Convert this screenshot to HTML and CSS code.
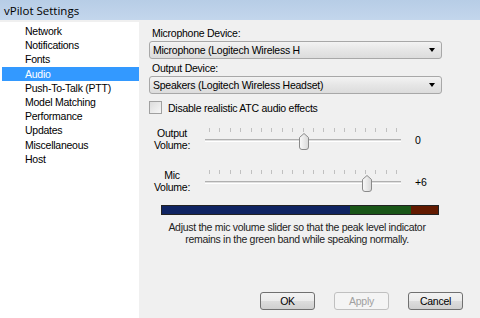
FILE: index.html
```html
<!DOCTYPE html>
<html lang="en">
<head>
    <meta charset="UTF-8">
    <title>vPilot Settings</title>
    <link rel="stylesheet" href="styles.css">
</head>
<body>
    <div class="window">
        <div class="titlebar">vPilot Settings</div>
        <div class="content">
            <ul class="nav">
                <li>Network</li>
                <li>Notifications</li>
                <li>Fonts</li>
                <li class="selected">Audio</li>
                <li>Push-To-Talk (PTT)</li>
                <li>Model Matching</li>
                <li>Performance</li>
                <li>Updates</li>
                <li>Miscellaneous</li>
                <li>Host</li>
            </ul>

            <div class="panel">
                <label class="field-label">Microphone Device:</label>
                <div class="combo">
                    <span>Microphone (Logitech Wireless H</span>
                    <span class="arrow"></span>
                </div>

                <label class="field-label">Output Device:</label>
                <div class="combo">
                    <span>Speakers (Logitech Wireless Headset)</span>
                    <span class="arrow"></span>
                </div>

                <div class="check-row">
                    <span class="checkbox"></span>
                    <span>Disable realistic ATC audio effects</span>
                </div>

                <div class="slider-row output">
                    <div class="slider-label">Output<br>Volume:</div>
                    <div class="slider">
                        <div class="ticks"></div>
                        <div class="track"></div>
                        <svg class="thumb" style="left: 94px" width="10" height="17" viewBox="0 0 10 17">
                            <defs>
                                <linearGradient id="tg1" x1="0" y1="0" x2="1" y2="0">
                                    <stop offset="0" stop-color="#fafafa"/>
                                    <stop offset="1" stop-color="#d8d8d8"/>
                                </linearGradient>
                            </defs>
                            <path d="M0.5 4.5 L5 0.5 L9.5 4.5 L9.5 14 Q9.5 16.5 7 16.5 L3 16.5 Q0.5 16.5 0.5 14 Z" fill="url(#tg1)" stroke="#8a8a8a"/>
                        </svg>
                    </div>
                    <div class="slider-value">0</div>
                </div>

                <div class="slider-row mic">
                    <div class="slider-label">Mic<br>Volume:</div>
                    <div class="slider">
                        <div class="ticks"></div>
                        <div class="track"></div>
                        <svg class="thumb" style="left: 157px" width="10" height="17" viewBox="0 0 10 17">
                            <path d="M0.5 4.5 L5 0.5 L9.5 4.5 L9.5 14 Q9.5 16.5 7 16.5 L3 16.5 Q0.5 16.5 0.5 14 Z" fill="url(#tg1)" stroke="#8a8a8a"/>
                        </svg>
                    </div>
                    <div class="slider-value">+6</div>
                </div>

                <div class="level-bar">
                    <div class="band blue"></div>
                    <div class="band green"></div>
                    <div class="band red"></div>
                </div>

                <p class="hint">Adjust the mic volume slider so that the peak level indicator<br>remains in the green band while speaking normally.</p>

                <div class="buttons">
                    <button class="btn">OK</button>
                    <button class="btn" disabled>Apply</button>
                    <button class="btn">Cancel</button>
                </div>
            </div>
        </div>
    </div>
</body>
</html>
```

FILE: styles.css
```css
body {
    margin: 0;
    font-family: "Liberation Sans", Arial, sans-serif;
    font-size: 10.5px;
    letter-spacing: -0.25px;
    color: #000;
    background: #f0f0f0;
}

.window {
    width: 480px;
    height: 318px;
    display: flex;
    flex-direction: column;
    overflow: hidden;
}

.titlebar {
    height: 20px;
    line-height: 21px;
    padding-left: 4px;
    font-family: "Open Sans", "Liberation Sans", sans-serif;
    font-size: 11.5px;
    letter-spacing: 0;
    background: linear-gradient(#b7cde6, #c3d6ec);
}

.content {
    flex: 1;
    display: flex;
    padding-top: 2px;
}

.nav {
    list-style: none;
    margin: 0;
    padding: 2px 0 0 2px;
    width: 137px;
    background: #fff;
}

.nav li {
    height: 14.2px;
    line-height: 14px;
    padding-left: 23px;
}

.nav li.selected {
    background: #3399ff;
    color: #fff;
}

.panel {
    flex: 1;
    display: flex;
    flex-direction: column;
    padding: 4px 0 0 10px;
}

.field-label {
    padding-left: 3px;
    height: 14px;
    line-height: 14px;
    margin-bottom: 1px;
}

.combo {
    width: 293px;
    height: 18px;
    box-sizing: border-box;
    border: 1px solid #a8a8a8;
    border-radius: 3px;
    background: linear-gradient(#f3f3f3, #e6e6e6 50%, #dcdcdc);
    display: flex;
    align-items: center;
    justify-content: space-between;
    padding: 0 6px 0 3px;
    margin-bottom: 2px;
}

.arrow {
    width: 0;
    height: 0;
    border-left: 3.5px solid transparent;
    border-right: 3.5px solid transparent;
    border-top: 4px solid #000;
}

.check-row {
    display: flex;
    align-items: center;
    gap: 6px;
    margin-top: 5px;
    height: 13px;
}

.checkbox {
    width: 11px;
    height: 11px;
    border: 1px solid #a0a0a0;
    background: linear-gradient(135deg, #dcdcdc, #f6f6f6);
}

.slider-row {
    display: flex;
    align-items: center;
    height: 30px;
}

.slider-row.output {
    margin-top: 10px;
}

.slider-row.mic {
    margin-top: 12px;
}

.slider-label {
    width: 46px;
    text-align: center;
    line-height: 12px;
    margin-right: 10px;
}

.slider {
    position: relative;
    width: 196px;
    height: 26px;
}

.ticks {
    margin: 2px 0 0 4px;
    width: 189px;
    height: 4px;
    background: repeating-linear-gradient(90deg, #b4b4b4 0 1px, transparent 1px 10.4px);
    opacity: 0.8;
}

.track {
    margin-top: 7px;
    height: 1px;
    border-top: 1px solid #b0b0b0;
    border-bottom: 1px solid #fff;
    background: #e0e0e0;
}

.thumb {
    position: absolute;
    top: 7px;
}

.slider-value {
    margin-left: 14px;
    padding-top: 2px;
}

.level-bar {
    display: flex;
    width: 276px;
    height: 8px;
    margin: 9px 0 0 12px;
    border: 1px solid #222;
}

.band.blue {
    width: 188px;
    background: #0f2462;
}

.band.green {
    width: 61px;
    background: #1a5618;
}

.band.red {
    flex: 1;
    background: #621a00;
}

.hint {
    margin: 6px 0 0 0;
    width: 296px;
    text-align: center;
    line-height: 12px;
    letter-spacing: -0.3px;
    color: #222;
}

.buttons {
    display: flex;
    justify-content: flex-end;
    gap: 19px;
    margin-top: auto;
    margin-bottom: 8px;
    padding-right: 17px;
}

.btn {
    width: 55px;
    height: 18px;
    font-family: inherit;
    font-size: 10.5px;
    letter-spacing: -0.25px;
    border: 1px solid #707070;
    border-radius: 3px;
    background: linear-gradient(#f2f2f2, #ebebeb 50%, #dddddd 50%, #cfcfcf);
    padding: 0;
}

.btn:disabled {
    border-color: #c0c0c0;
    background: #f4f4f4;
    color: #a0a0a0;
}
```
